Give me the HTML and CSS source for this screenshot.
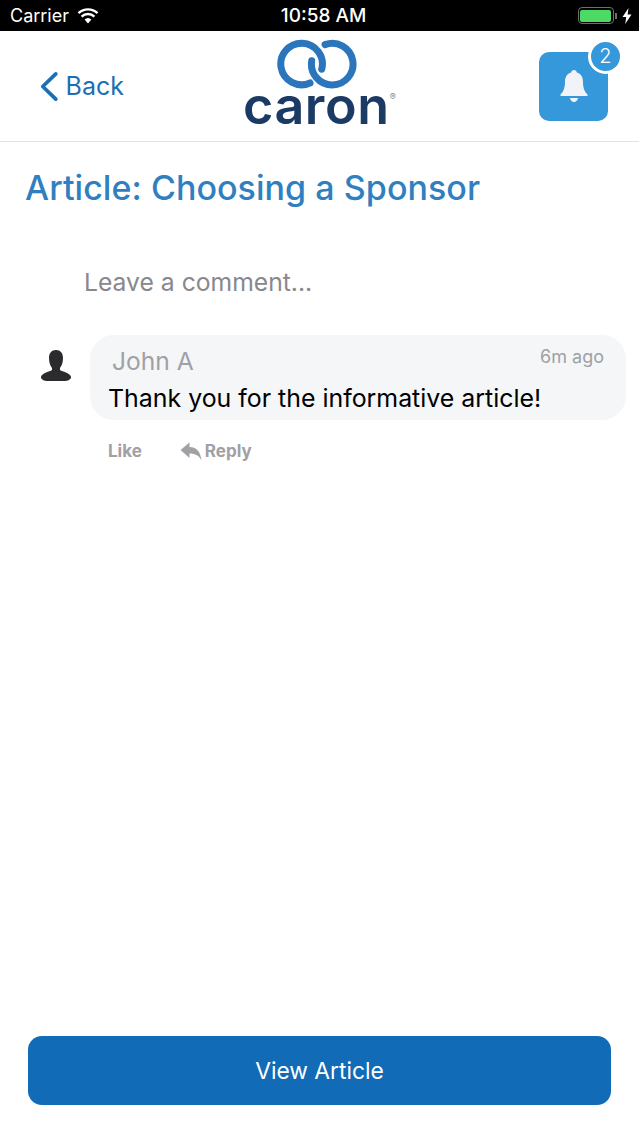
FILE: index.html
```html
<!DOCTYPE html>
<html lang="en">
<head>
    <meta charset="UTF-8">
    <meta name="viewport" content="width=device-width, initial-scale=1.0">
    <title>Article Comments</title>
    <link rel="stylesheet" href="styles.css">
</head>
<body>
    <div class="page">
        <div class="status-bar">
            <div class="status-left">
                <span class="carrier">Carrier</span>
                <svg class="wifi" width="22" height="16" viewBox="0 0 22 16">
                    <path d="M11 15.5 L7.6 11.6 A5 5 0 0 1 14.4 11.6 Z" fill="#fff"/>
                    <path d="M4.6 8.6 A9.2 9.2 0 0 1 17.4 8.6" fill="none" stroke="#fff" stroke-width="2.4"/>
                    <path d="M1.5 5.2 A13.6 13.6 0 0 1 20.5 5.2" fill="none" stroke="#fff" stroke-width="2.4"/>
                </svg>
            </div>
            <span class="clock">10:58 AM</span>
            <div class="status-right">
                <div class="battery"><div class="battery-level"></div></div>
                <div class="battery-cap"></div>
                <svg class="bolt" width="10" height="16" viewBox="0 0 10 16">
                    <path d="M6.5 0 L0.5 9 H4.2 L3.2 16 L9.5 6.5 H5.6 Z" fill="#fff"/>
                </svg>
            </div>
        </div>

        <div class="header">
            <div class="back">
                <svg width="21" height="33" viewBox="0 0 21 33">
                    <path d="M18 3 L4 16.5 L18 30" fill="none" stroke="#1a6fb5" stroke-width="4" stroke-linecap="round" stroke-linejoin="round"/>
                </svg>
                <span>Back</span>
            </div>
            <div class="logo">
                <svg class="logo-rings" width="82" height="50" viewBox="276 39 82 50">
                    <path d="M310 83 A20.8 20.8 0 1 1 321.7 69.3" fill="none" stroke="#2a75bb" stroke-width="7" stroke-linecap="round"/>
                    <path d="M325 44.6 A20.8 20.8 0 1 1 311.7 60.7" fill="none" stroke="#2a75bb" stroke-width="7" stroke-linecap="round"/>
                </svg>
                <div class="logo-word">caron<sup class="logo-reg">®</sup></div>
            </div>
            <div class="bell-button">
                <svg width="30" height="34" viewBox="0 0 30 34">
                    <path d="M15 1 C16.6 1 17.6 2 17.8 3.6 C22 4.8 24 8.200 24 13 C24 19 25.500 22.500 28.500 25.500 V27 H1.500 V25.500 C4.500 22.500 6 19 6 13 C6 8.200 8 4.800 12.200 3.600 C12.400 2 13.400 1 15 1 Z" fill="#f1f3f8"/>
                    <path d="M11 29 H19 C18.500 31.500 17 33 15 33 C13 33 11.500 31.500 11 29 Z" fill="#f1f3f8"/>
                </svg>
                <div class="badge">2</div>
            </div>
        </div>

        <h1 class="title">Article: Choosing a Sponsor</h1>

        <div class="comment-input">Leave a comment...</div>

        <div class="comment">
            <svg class="avatar" width="32" height="31" viewBox="0 0 32 31">
                <path d="M16 0 C20.500 0 23 3 23 8 C23 13 21.500 16 20 18 V20 C21 21 24 21.500 27 23 C29.500 24.200 31 25.500 31 27 C31 29.500 28 31 24 31 H8 C4 31 1 29.500 1 27 C1 25.500 2.500 24.200 5 23 C8 21.500 11 21 12 20 V18 C10.500 16 9 13 9 8 C9 3 11.500 0 16 0 Z" fill="#2b2b2e"/>
            </svg>
            <div class="comment-main">
                <div class="bubble">
                    <div class="bubble-top">
                        <span class="author">John A</span>
                        <span class="age">6m ago</span>
                    </div>
                    <div class="comment-text">Thank you for the informative article!</div>
                </div>
                <div class="actions">
                    <span class="action">Like</span>
                    <span class="action reply">
                        <svg width="22" height="19" viewBox="0 0 22 19">
                            <path d="M0.500 8 L9.500 0.500 V5 C16 5 20.500 9 21.500 18.500 C19 13.500 15.500 11.500 9.500 11.500 V16 Z" fill="#a0a0a5"/>
                        </svg>
                        Reply
                    </span>
                </div>
            </div>
        </div>

        <button class="view-article">View Article</button>
    </div>
</body>
</html>
```

FILE: styles.css
```css
body {
    margin: 0;
    background: white;
    font-family: Inter, "Liberation Sans", sans-serif;
}
.page {
    width: 639px;
    height: 1136px;
    display: flex;
    flex-direction: column;
    overflow: hidden;
}
.status-bar {
    height: 31px;
    background: black;
    color: white;
    display: flex;
    align-items: center;
    justify-content: space-between;
    padding: 0 7px 0 10px;
    font-size: 18px;
    position: relative;
}
.status-left, .status-right {
    display: flex;
    align-items: center;
}
.wifi {
    margin-left: 8px;
}
.clock {
    font-size: 19px;
    font-weight: 500;
    margin-right: 30px;
}
.battery {
    width: 36px;
    height: 17px;
    box-sizing: border-box;
    border: 1.5px solid #6e6e6e;
    border-radius: 4px;
    padding: 1.5px;
}
.battery-level {
    height: 100%;
    background: #4cd964;
    border-radius: 2px;
}
.battery-cap {
    width: 2px;
    height: 6px;
    background: #6e6e6e;
    margin-left: 1px;
}
.bolt {
    margin-left: 5px;
}
.header {
    height: 110px;
    border-bottom: 1px solid #e3e3e5;
    display: flex;
    align-items: center;
    padding: 0 31px 0 39px;
}
.back {
    display: flex;
    align-items: center;
    gap: 7px;
    width: 85px;
    color: #1a6fb5;
    font-size: 25px;
    line-height: 30px;
}
.logo {
    margin-left: 121px;
    width: 160px;
    display: flex;
    flex-direction: column;
    align-items: flex-start;
}
.logo-rings {
    margin-left: 31px;
    margin-top: -5px;
}
.logo-word {
    font-size: 52px;
    font-weight: 600;
    line-height: 38px;
    color: #1b3a64;
    letter-spacing: 0.6px;
    margin-left: -2px;
    margin-top: -2px;
    padding-bottom: 3px;
}
.logo-reg {
    font-size: 9px;
    font-weight: 400;
    line-height: 0;
    vertical-align: 24px;
    letter-spacing: 0;
    color: #7d8a9c;
}
.bell-button {
    margin-left: auto;
    width: 69px;
    height: 69px;
    background: #3498db;
    border-radius: 10px;
    display: flex;
    align-items: center;
    justify-content: center;
    position: relative;
}
.badge {
    position: absolute;
    top: -13px;
    right: -15px;
    width: 29px;
    height: 29px;
    background: #3498db;
    border: 3px solid white;
    border-radius: 50%;
    color: white;
    font-size: 20px;
    font-weight: 300;
    display: flex;
    align-items: center;
    justify-content: center;
}
.title {
    margin: 25px 0 0 25px;
    font-size: 34px;
    font-weight: 500;
    line-height: 42px;
    letter-spacing: 0.05px;
    color: #2f7fc1;
}
.comment-input {
    margin: 57px 0 0 84px;
    font-size: 24.7px;
    line-height: 32px;
    color: #88888c;
}
.comment {
    margin: 37px 13px 0 40px;
    display: flex;
    align-items: flex-start;
    gap: 18px;
}
.avatar {
    margin-top: 15px;
}
.comment-main {
    flex: 1;
}
.bubble {
    height: 85px;
    box-sizing: border-box;
    background: #f4f6f8;
    border-radius: 24px;
    padding: 10px 22px 0 19px;
}
.bubble-top {
    display: flex;
    justify-content: space-between;
    align-items: flex-start;
    padding-left: 3px;
}
.author {
    font-size: 24.6px;
    line-height: 32px;
    color: #a0a0a5;
}
.age {
    font-size: 18px;
    line-height: 24px;
    color: #a0a0a5;
}
.comment-text {
    font-size: 24.9px;
    line-height: 34px;
    margin-top: 4px;
    margin-left: -1px;
    color: black;
}
.actions {
    display: flex;
    align-items: center;
    gap: 38px;
    margin: 21px 0 0 18px;
    font-size: 17px;
    font-weight: 700;
    color: #a0a0a5;
}
.action {
    display: flex;
    align-items: center;
    gap: 3px;
}
.view-article {
    margin: auto 28px 31px;
    height: 69px;
    background: #116bb6;
    color: white;
    border: none;
    border-radius: 14px;
    font-family: inherit;
    font-size: 22.800px;
    font-weight: 400;
    cursor: pointer;
}
```
